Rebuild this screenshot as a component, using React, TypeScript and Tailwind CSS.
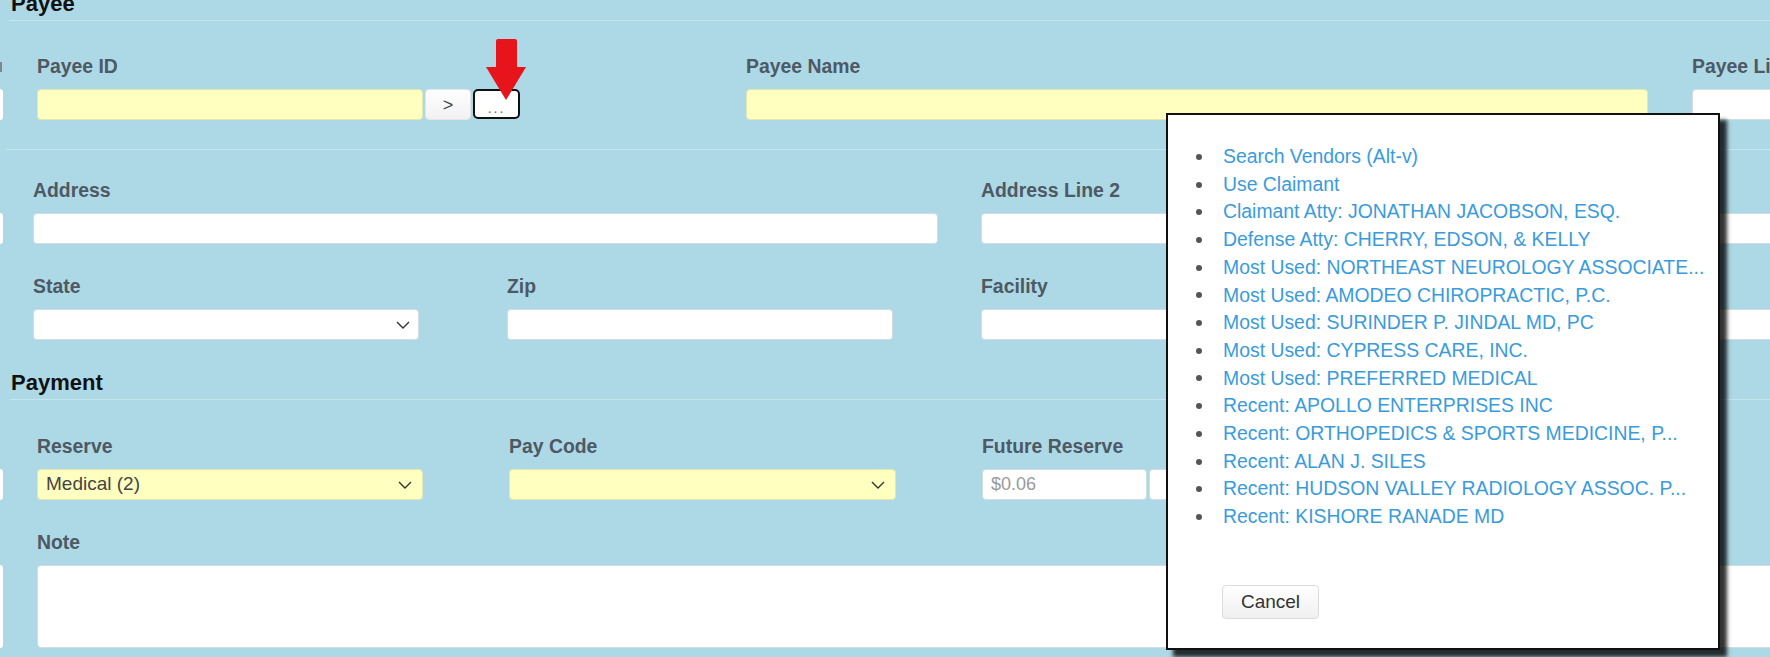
import React from "react";

const LABEL = "block text-[19.4px] font-bold leading-[28px] mb-[9px] text-[#4d5963] whitespace-nowrap";
const INPUT_W = "h-[31px] rounded-[4px] border border-[#d3dde1] bg-white";
const INPUT_Y = "h-[31px] rounded-[4px] border border-[#e6e6b0] bg-[#ffffc0]";

function Chevron() {
  return (
    <svg width="14" height="8" viewBox="0 0 14 8" className="shrink-0">
      <polyline points="1,1 7,7 13,1" fill="none" stroke="#333" strokeWidth="1.4" />
    </svg>
  );
}

function Stub({ label, tall }: { label?: boolean; tall?: boolean }) {
  return (
    <div className="w-[3px] shrink-0 flex flex-col">
      <div className="h-[28px] mb-[9px] flex items-center">
        {label ? <div className="w-[2px] h-[10px] bg-[#7a8890] mt-[2px]" /> : null}
      </div>
      <div className={`${tall ? "h-[83px]" : "h-[31px]"} bg-white rounded-r-[3px]`} />
    </div>
  );
}

const items = [
  "Search Vendors (Alt-v)",
  "Use Claimant",
  "Claimant Atty: JONATHAN JACOBSON, ESQ.",
  "Defense Atty: CHERRY, EDSON, & KELLY",
  "Most Used: NORTHEAST NEUROLOGY ASSOCIATE...",
  "Most Used: AMODEO CHIROPRACTIC, P.C.",
  "Most Used: SURINDER P. JINDAL MD, PC",
  "Most Used: CYPRESS CARE, INC.",
  "Most Used: PREFERRED MEDICAL",
  "Recent: APOLLO ENTERPRISES INC",
  "Recent: ORTHOPEDICS & SPORTS MEDICINE, P...",
  "Recent: ALAN J. SILES",
  "Recent: HUDSON VALLEY RADIOLOGY ASSOC. P...",
  "Recent: KISHORE RANADE MD",
];

export default function App() {
  return (
    <div
      className="relative w-[1770px] h-[657px] overflow-hidden bg-[#add8e6]"
      style={{ fontFamily: '"Liberation Sans", Arial, sans-serif' }}
    >
      {/* Payee heading */}
      <div className="mt-[-8px] ml-[10px] pl-[1px] pb-[4px] border-b border-[#c8e5ee]">
        <h2 className="text-[22px] font-bold leading-[24px] text-[#111]">Payee</h2>
      </div>

      {/* Payee row */}
      <div className="flex mt-[31px]">
        <Stub label />
        <div className="ml-[34px] w-[483px] shrink-0">
          <label className={LABEL}>Payee ID</label>
          <div className="flex gap-[2px]">
            <div className={`${INPUT_Y} h-[30px] w-[386px]`} />
            <button className="h-[31px] w-[46px] rounded-[4px] border border-[#e6e6e6] bg-gradient-to-b from-white to-[#f1f1f1] text-[18px] text-[#444] leading-none">
              &gt;
            </button>
            <button className="h-[30px] w-[47px] rounded-[5px] border-2 border-[#111] bg-white text-[14px] text-[#666] leading-none pt-[8px] tracking-[2px]">
              ...
            </button>
          </div>
        </div>
        <div className="ml-[226px] w-[902px] shrink-0">
          <label className={LABEL}>Payee Name</label>
          <div className={`${INPUT_Y} h-[30px] w-full`} />
        </div>
        <div className="ml-[44px] w-[400px] shrink-0">
          <label className={LABEL}>Payee Line</label>
          <div className={`${INPUT_W} h-[30px] w-full`} />
        </div>
      </div>

      {/* row separator */}
      <div className="mt-[29px] ml-[6px] border-t border-[#c8e5ee]" />

      {/* Address row */}
      <div className="flex mt-[26px]">
        <Stub />
        <div className="ml-[30px] w-[905px] shrink-0">
          <label className={LABEL}>Address</label>
          <div className={`${INPUT_W} w-full`} />
        </div>
        <div className="ml-[43px] w-[900px] shrink-0">
          <label className={LABEL}>Address Line 2</label>
          <div className={`${INPUT_W} w-full`} />
        </div>
      </div>

      {/* State row */}
      <div className="flex mt-[28px]">
        <div className="w-[3px] shrink-0" />
        <div className="ml-[30px] w-[386px] shrink-0">
          <label className={LABEL}>State</label>
          <div className={`${INPUT_W} w-full flex items-center justify-end pr-[8px]`}>
            <Chevron />
          </div>
        </div>
        <div className="ml-[88px] w-[386px] shrink-0">
          <label className={LABEL}>Zip</label>
          <div className={`${INPUT_W} w-full`} />
        </div>
        <div className="ml-[88px] w-[900px] shrink-0">
          <label className={LABEL}>Facility</label>
          <div className={`${INPUT_W} w-full`} />
        </div>
      </div>

      {/* Payment heading */}
      <div className="mt-[31px] ml-[10px] pl-[1px] pb-[4px] border-b border-[#c8e5ee]">
        <h2 className="text-[22px] font-bold leading-[24px] text-[#111]">Payment</h2>
      </div>

      {/* Reserve row */}
      <div className="flex mt-[32px]">
        <Stub />
        <div className="ml-[34px] w-[386px] shrink-0">
          <label className={LABEL}>Reserve</label>
          <div className={`${INPUT_Y} w-full flex items-center justify-between pl-[8px] pr-[10px]`}>
            <span className="text-[19px] text-[#444]">Medical (2)</span>
            <Chevron />
          </div>
        </div>
        <div className="ml-[86px] w-[387px] shrink-0">
          <label className={LABEL}>Pay Code</label>
          <div className={`${INPUT_Y} w-full flex items-center justify-end pr-[10px]`}>
            <Chevron />
          </div>
        </div>
        <div className="ml-[86px] w-[500px] shrink-0">
          <label className={LABEL}>Future Reserve</label>
          <div className="flex gap-[2px]">
            <div className={`${INPUT_W} w-[165px] flex items-center pl-[8px]`}>
              <span className="text-[18px] text-[#9a9a9a]">$0.06</span>
            </div>
            <div className={`${INPUT_W} w-[300px]`} />
          </div>
        </div>
      </div>

      {/* Note row */}
      <div className="flex mt-[28px]">
        <Stub tall />
        <div className="ml-[34px] w-[1800px] shrink-0">
          <label className={LABEL}>Note</label>
          <div className="h-[83px] w-full rounded-[4px] border border-[#d3dde1] bg-white" />
        </div>
      </div>

      {/* Red arrow annotation */}
      <svg
        className="absolute left-[486px] top-[39px]"
        width="40"
        height="61"
        viewBox="0 0 40 61"
      >
        <path d="M12 0 H29 Q31 0 31 2 V28 H40 L20 61 L0 28 H10 V2 Q10 0 12 0 Z" fill="#e8141c" />
      </svg>

      {/* Popup */}
      <div className="absolute left-[1166px] top-[113px] w-[554px] h-[537px] border-2 border-[#111] bg-white shadow-[7px_7px_4px_rgba(0,0,0,0.8)]">
        <ul className="pl-[28px] pt-[28px] text-[19.4px] leading-[27.7px]">
          {items.map((t) => (
            <li key={t} className="flex items-center">
              <span className="w-[6px] h-[6px] rounded-full bg-[#555] mr-[21px] shrink-0" />
              <a className="text-[#3a9bdc] whitespace-nowrap" href="#">
                {t}
              </a>
            </li>
          ))}
        </ul>
        <button className="mt-[54px] ml-[54px] h-[34px] w-[97px] rounded-[4px] border border-[#dcdcdc] bg-gradient-to-b from-white to-[#f0f0f0] text-[19px] text-[#333]">
          Cancel
        </button>
      </div>
    </div>
  );
}
